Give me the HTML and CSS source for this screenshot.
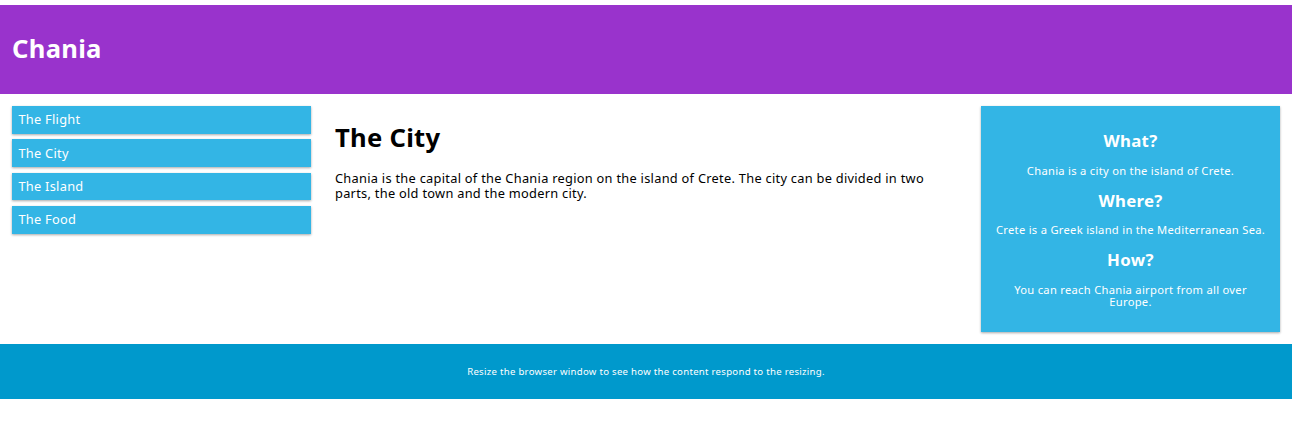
FILE: index.html
```html
<!DOCTYPE html>
<html lang="en">
<head>
<meta charset="utf-8">
<title>Chania</title>
<link rel="stylesheet" href="styles.css">
</head>
<body>
<header class="header">
  <h1>Chania</h1>
</header>
<div class="row">
  <nav class="col-3 menu">
    <ul>
      <li>The Flight</li>
      <li>The City</li>
      <li>The Island</li>
      <li>The Food</li>
    </ul>
  </nav>
  <main class="col-6 content">
    <h1>The City</h1>
    <p>Chania is the capital of the Chania region on the island of Crete. The city can be divided in two parts, the old town and the modern city.</p>
  </main>
  <div class="col-3">
    <aside class="aside">
      <h2>What?</h2>
      <p>Chania is a city on the island of Crete.</p>
      <h2>Where?</h2>
      <p>Crete is a Greek island in the Mediterranean Sea.</p>
      <h2>How?</h2>
      <p>You can reach Chania airport from all over Europe.</p>
    </aside>
  </div>
</div>
<footer class="footer">
  <p>Resize the browser window to see how the content respond to the resizing.</p>
</footer>
</body>
</html>
```
FILE: styles.css
```css
* { box-sizing: border-box; }

html {
  font-family: "Noto Sans", "Open Sans", sans-serif;
  font-size: 12.8px;
  letter-spacing: 0.022em;
}

body {
  margin: 5px 5px 0 0;
  line-height: 1.15;
  color: #000;
}

.header {
  background-color: #9933cc;
  color: #ffffff;
  padding: 12px;
}

.header h1 {
  font-size: 25.6px;
  line-height: 1.2;
  margin: 17.15px 0;
}

.row {
  display: flex;
  align-items: flex-start;
}

.col-3 { width: 25%; padding: 12px; }
.col-6 { width: 50%; padding: 12px; }

.menu ul {
  list-style-type: none;
  margin: 0;
  padding: 0;
}

.menu li {
  padding: 6.4px;
  margin-bottom: 5.6px;
  background-color: #33b5e5;
  color: #ffffff;
  line-height: 1.17;
  box-shadow: 0 1px 3px rgba(0,0,0,0.12), 0 1px 2px rgba(0,0,0,0.24);
}

.content h1 {
  font-size: 25.6px;
  line-height: 1.2;
  margin: 17.15px 0;
}

.content p {
  margin: 12.8px 0;
  line-height: 1.17;
}

.aside {
  background-color: #33b5e5;
  padding: 12px;
  color: #ffffff;
  text-align: center;
  font-size: 11.2px;
  line-height: 1.12;
  box-shadow: 0 1px 3px rgba(0,0,0,0.12), 0 1px 2px rgba(0,0,0,0.24);
}

.aside h2 {
  font-size: 16.8px;
  margin: 14.2px 0 13.94px;
}

.aside p {
  margin: 11.2px 0;
}

.footer {
  background-color: #0099cc;
  color: #ffffff;
  text-align: center;
  font-size: 9.6px;
  line-height: 1.23;
  padding: 12px;
}

.footer p {
  margin: 9.6px 0;
}
```
